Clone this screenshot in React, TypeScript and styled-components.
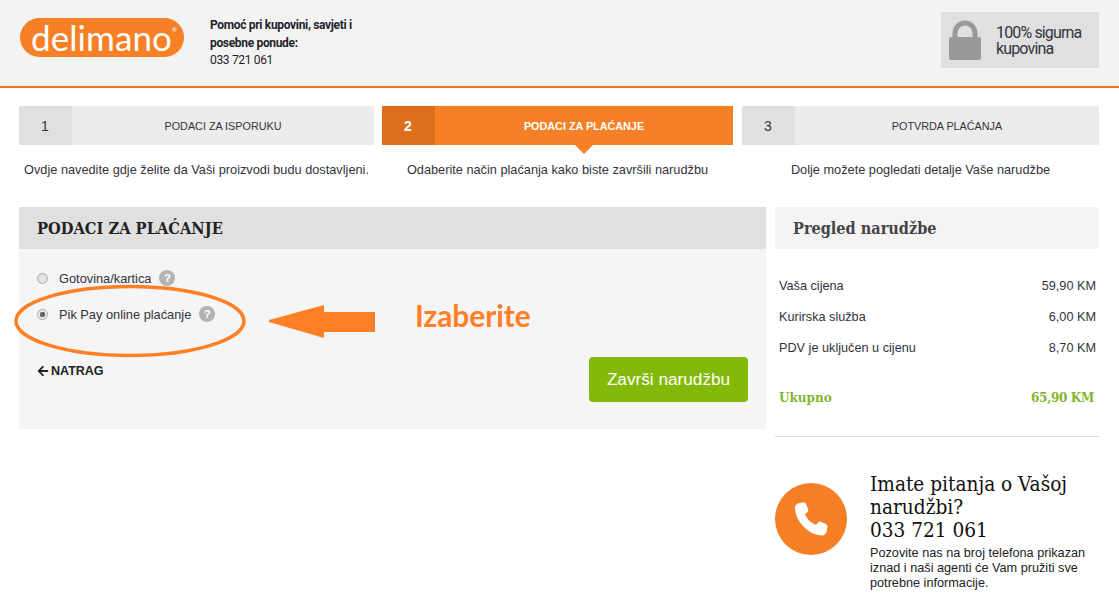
import React from "react";
import styled, { createGlobalStyle } from "styled-components";
import { FaArrowLeft } from "react-icons/fa";

const Global = createGlobalStyle`
  html, body { margin: 0; padding: 0; background: #fff; }
  body { font-family: "Liberation Sans", Arial, sans-serif; color: #222; overflow: hidden; }
`;
const slab = `"DejaVu Serif Condensed", "DejaVu Serif", serif`;

const Page = styled.div`
  position: relative;
  width: 1119px;
  height: 599px;
  overflow: hidden;
`;
const Header = styled.header`
  height: 86px;
  background: #f3f3f3;
  border-bottom: 2px solid #f0751f;
  display: flex;
  align-items: flex-start;
  padding: 0 20px;
`;
const Logo = styled.div`
  position: relative;
  width: 164px;
  height: 39px;
  margin-top: 18px;
  border-radius: 20px;
  background: #f68025;
  color: #fff;
  font-family: "Lato", sans-serif;
  font-weight: 400;
  font-size: 35px;
  letter-spacing: 0.1px;
  line-height: 38px;
  text-align: center;
  padding-right: 1px;
  box-sizing: border-box;
`;
const Registered = styled.span`
  position: absolute;
  top: 9px;
  right: 7px;
  font-size: 6px;
  line-height: 6px;
  letter-spacing: 0;
`;
const HelpBlock = styled.div`
  margin: 17px 0 0 26px;
  width: 160px;
  font-family: Roboto, sans-serif;
  font-size: 12px;
  line-height: 17.5px;
  letter-spacing: -0.33px;
  color: #1f1f2b;
`;
const HelpStrong = styled.strong`
  display: block;
  font-weight: 700;
`;
const Secure = styled.div`
  margin: 12px 0 0 auto;
  width: 158px;
  height: 56px;
  background: #e0e0e0;
  display: flex;
  align-items: center;
  padding-left: 8px;
  box-sizing: border-box;
  gap: 15px;
`;
const SecureText = styled.div`
  font-family: Roboto, sans-serif;
  font-size: 16px;
  line-height: 16px;
  letter-spacing: -0.85px;
  color: #33333d;
  padding-top: 1px;
`;
const Main = styled.main`
  padding: 18px 20px 0 19px;
`;
const Steps = styled.div`
  display: grid;
  grid-template-columns: 355px 351px 358px;
  column-gap: 8px;
`;
const StepCell = styled.div`
  display: flex;
  flex-direction: column;
  &:last-child {
    margin-left: 1px;
  }
`;
const StepBar = styled.div<{ $active?: boolean }>`
  position: relative;
  height: 39px;
  display: flex;
  background: ${(p) => (p.$active ? "#f68025" : "#ececec")};
  color: ${(p) => (p.$active ? "#fff" : "#33333d")};
  font-weight: ${(p) => (p.$active ? 700 : 400)};
`;
const StepNum = styled.div<{ $active?: boolean }>`
  width: 53px;
  background: ${(p) => (p.$active ? "#de6f1c" : "#e0e0e0")};
  font-size: 14px;
  display: flex;
  align-items: center;
  justify-content: center;
  padding-right: 1px;
  box-sizing: border-box;
`;
const StepTitle = styled.div`
  flex: 1;
  font-size: 10.8px;
  display: flex;
  align-items: center;
  justify-content: center;
`;
const StepPointer = styled.span`
  position: absolute;
  left: 193px;
  bottom: -9px;
  border-left: 9px solid transparent;
  border-right: 9px solid transparent;
  border-top: 9px solid #f68025;
`;
const StepDesc = styled.p`
  margin: 17px 0 0;
  height: 16px;
  font-size: 12.75px;
  line-height: 16px;
  text-align: center;
  color: #33333d;
`;
const Columns = styled.div`
  margin-top: 29px;
  display: grid;
  grid-template-columns: 747px 324px;
  column-gap: 9px;
  align-items: start;
`;
const Panel = styled.section`
  background: #f5f5f5;
  height: 222px;
`;
const PanelHead = styled.h2`
  margin: 0;
  height: 42px;
  line-height: 43px;
  padding-left: 18px;
  background: #e0e0e0;
  font-family: ${slab};
  font-stretch: condensed;
  font-size: 16.3px;
  font-weight: 700;
  color: #222;
`;
const PanelBody = styled.div`
  padding: 20px 18px 0 18px;
`;
const Option = styled.label`
  height: 18px;
  display: flex;
  align-items: center;
  font-size: 12.8px;
  color: #33333d;
  margin-bottom: 18px;
`;
const Radio = styled.input`
  appearance: none;
  width: 11px;
  height: 11px;
  margin: 0 11px 0 0;
  border-radius: 50%;
  border: 1px solid #a9a9a9;
  box-sizing: border-box;
  background: radial-gradient(circle, #e8e8e8, #dcdcdc);
  &:checked {
    background: radial-gradient(circle, #666 0 2.5px, #e8e8e8 3px);
  }
`;
const Help = styled.span`
  width: 16px;
  height: 16px;
  margin-left: 8px;
  border-radius: 50%;
  background: #b3b3b3;
  color: #fff;
  font-size: 11.5px;
  font-weight: 700;
  display: flex;
  align-items: center;
  justify-content: center;
`;
const Footer = styled.div`
  margin-top: 34px;
  display: flex;
  justify-content: space-between;
  align-items: flex-start;
`;
const Back = styled.a`
  display: flex;
  align-items: center;
  gap: 2px;
  margin-top: 7px;
  font-size: 12.5px;
  font-weight: 700;
  color: #222;
`;
const Submit = styled.button`
  width: 159px;
  height: 45px;
  border: 0;
  border-radius: 4px;
  background: #84b909;
  color: #fff;
  font-family: inherit;
  font-size: 17.2px;
  padding: 0;
`;
const SummaryHead = styled.h3`
  margin: 0;
  height: 42px;
  line-height: 43px;
  padding-left: 18px;
  background: #f4f4f4;
  font-family: ${slab};
  font-stretch: condensed;
  font-size: 16.1px;
  font-weight: 700;
  color: #444;
`;
const Rows = styled.div`
  padding: 21px 3px 0 4px;
`;
const Row = styled.div`
  height: 31px;
  display: flex;
  justify-content: space-between;
  align-items: center;
  font-size: 12.7px;
  color: #33333d;
`;
const TotalRow = styled.div`
  margin-top: 18px;
  height: 31px;
  display: flex;
  justify-content: space-between;
  align-items: center;
  font-family: ${slab};
  font-stretch: condensed;
  font-size: 13.4px;
  font-weight: 700;
  color: #84b52e;
  padding-right: 2px;
`;
const TotalValue = styled.span`
  letter-spacing: -0.35px;
`;
const Divider = styled.hr`
  margin: 24px 0 0;
  border: 0;
  border-top: 1px solid #dcdcdc;
`;
const Contact = styled.div`
  margin-top: 36px;
  display: flex;
  gap: 23px;
`;
const PhoneCircle = styled.div`
  flex: none;
  width: 72px;
  height: 72px;
  margin-top: 10px;
  border-radius: 50%;
  background: #f68025;
  display: flex;
  align-items: center;
  justify-content: center;
`;
const ContactText = styled.div`
  width: 232px;
`;
const ContactTitle = styled.div`
  font-family: ${slab};
  font-stretch: condensed;
  font-size: 20.6px;
  line-height: 23px;
  color: #111;
`;
const ContactNote = styled.p`
  margin: 4px 0 0;
  font-size: 12.7px;
  line-height: 15px;
  color: #222;
`;
const Ellipse = styled.svg`
  position: absolute;
  left: 12px;
  top: 282px;
`;
const Arrow = styled.svg`
  position: absolute;
  left: 269px;
  top: 305px;
`;
const Callout = styled.div`
  position: absolute;
  left: 415px;
  top: 298px;
  font-family: "Lato", sans-serif;
  font-size: 29.8px;
  line-height: 36px;
  font-weight: 700;
  color: #ff7f27;
`;

const steps = [
  { n: 1, title: "PODACI ZA ISPORUKU", desc: "Ovdje navedite gdje želite da Vaši proizvodi budu dostavljeni." },
  { n: 2, title: "PODACI ZA PLAĆANJE", desc: "Odaberite način plaćanja kako biste završili narudžbu", active: true },
  { n: 3, title: "POTVRDA PLAĆANJA", desc: "Dolje možete pogledati detalje Vaše narudžbe" },
];

export default function App() {
  return (
    <Page>
      <Global />
      <Header>
        <Logo>delimano<Registered>®</Registered></Logo>
        <HelpBlock>
          <HelpStrong>Pomoć pri kupovini, savjeti i posebne ponude:</HelpStrong>
          033 721 061
        </HelpBlock>
        <Secure>
          <svg width="32" height="40" viewBox="0 0 32 40">
            <path d="M6 18V13a10 10 0 0 1 20 0v5" fill="none" stroke="#999" strokeWidth="5" />
            <rect x="0" y="17" width="32" height="23" rx="2" fill="#999" />
          </svg>
          <SecureText>100% sigurna<br />kupovina</SecureText>
        </Secure>
      </Header>
      <Main>
        <Steps>
          {steps.map((s) => (
            <StepCell key={s.n}>
              <StepBar $active={s.active}>
                <StepNum $active={s.active}>{s.n}</StepNum>
                <StepTitle>{s.title}</StepTitle>
                {s.active && <StepPointer />}
              </StepBar>
              <StepDesc>{s.desc}</StepDesc>
            </StepCell>
          ))}
        </Steps>
        <Columns>
          <Panel>
            <PanelHead>PODACI ZA PLAĆANJE</PanelHead>
            <PanelBody>
              <Option>
                <Radio type="radio" name="pay" readOnly />
                Gotovina/kartica
                <Help>?</Help>
              </Option>
              <Option>
                <Radio type="radio" name="pay" defaultChecked />
                Pik Pay online plaćanje
                <Help>?</Help>
              </Option>
              <Footer>
                <Back><FaArrowLeft size={12} />NATRAG</Back>
                <Submit>Završi narudžbu</Submit>
              </Footer>
            </PanelBody>
          </Panel>
          <aside>
            <SummaryHead>Pregled narudžbe</SummaryHead>
            <Rows>
              <Row><span>Vaša cijena</span><span>59,90 KM</span></Row>
              <Row><span>Kurirska služba</span><span>6,00 KM</span></Row>
              <Row><span>PDV je uključen u cijenu</span><span>8,70 KM</span></Row>
              <TotalRow><span>Ukupno</span><TotalValue>65,90 KM</TotalValue></TotalRow>
            </Rows>
            <Divider />
            <Contact>
              <PhoneCircle>
                <svg width="42" height="42" viewBox="0 0 24 24" fill="#fff" stroke="#fff" strokeWidth="1" strokeLinejoin="round">
                  <path d="M5 3.5 7.6 3a1 1 0 0 1 1.1.6l1.2 3a1 1 0 0 1-.3 1.1L8 9c.9 2.900 3.600 5.700 7 7l1.300-1.600a1 1 0 0 1 1.100-.3l2.900 1.200a1 1 0 0 1 .6 1.100L20.400 19c-.3 1.200-1.400 2-2.600 1.900C10.400 20.300 3.900 13.400 3.300 6 3.200 4.800 3.900 3.800 5 3.500Z" />
                </svg>
              </PhoneCircle>
              <ContactText>
                <ContactTitle>Imate pitanja o Vašoj<br />narudžbi?<br />033 721 061</ContactTitle>
                <ContactNote>Pozovite nas na broj telefona prikazan iznad i naši agenti će Vam pružiti sve potrebne informacije.</ContactNote>
              </ContactText>
            </Contact>
          </aside>
        </Columns>
      </Main>
      <Ellipse width="238" height="80" viewBox="0 0 238 80">
        <ellipse cx="118" cy="39" rx="114" ry="34.500" fill="none" stroke="#ff7f27" strokeWidth="3.500" />
      </Ellipse>
      <Arrow width="106" height="34" viewBox="0 0 106 34">
        <polygon points="0,15 55,0 55,33 0,17" fill="#ff7f27" />
        <rect x="55" y="7" width="51" height="20" fill="#ff7f27" />
      </Arrow>
      <Callout>Izaberite</Callout>
    </Page>
  );
}
